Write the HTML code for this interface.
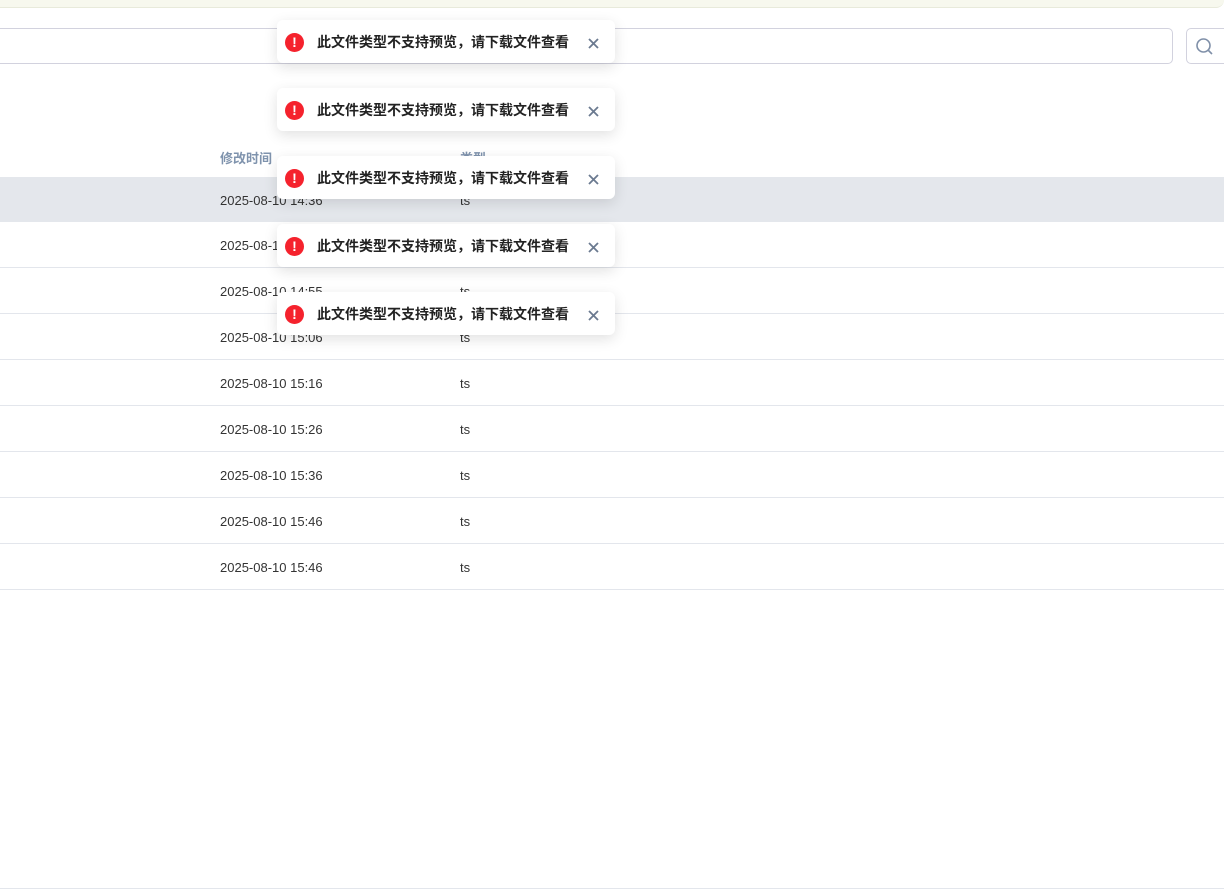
<!DOCTYPE html>
<html><head><meta charset="utf-8"><style>
*{box-sizing:border-box;margin:0;padding:0}
body{width:1224px;height:891px;overflow:hidden;background:#fff;font-family:"Liberation Sans","Noto Sans CJK SC",sans-serif;position:relative;color:#333}
.top{position:absolute;left:0;top:0;width:1224px;height:8px;background:#f7f8ee;border-bottom:1px solid #e8eadb;border-bottom-right-radius:8px}
.inp{position:absolute;left:-10px;top:28px;width:1183px;height:36px;border:1px solid #d2d2de;border-radius:5px}
.sb{position:absolute;left:1186px;top:28px;width:60px;height:36px;border:1px solid #d2d2de;border-radius:5px}
.hd{position:absolute;top:148px;font-size:13px;color:#7f93ad;font-weight:bold}
.row{position:absolute;left:0;width:1224px;height:46px;border-bottom:1px solid #e3e6ec;font-size:13px;color:#333}
.row span{position:absolute;top:16px}
.t{position:absolute;left:277px;width:338px;height:43px;background:#fff;border-radius:6px;box-shadow:0 4px 14px rgba(0,0,0,.12);font-size:14px;font-weight:bold;color:#222}
.t .ic{position:absolute;left:8px;top:13px;width:19px;height:19px;border-radius:50%;background:#f5222d;color:#fff;font-size:14px;line-height:19px;text-align:center;font-weight:bold}
.t .tx{position:absolute;left:40px;top:12px}
.t svg{position:absolute;left:311px;top:18px}
.bot{position:absolute;left:0;top:888px;width:1224px;height:1px;background:#e3e6ec}
</style></head><body>
<div class="top"></div>
<div class="inp"></div>
<div class="sb"><svg width="20" height="20" style="position:absolute;left:8px;top:8px" viewBox="0 0 20 20"><circle cx="8.5" cy="8.5" r="6.5" fill="none" stroke="#7f8fa8" stroke-width="1.6"/><path d="M13.5 13.5L17 17" stroke="#7f8fa8" stroke-width="1.6"/></svg></div>
<div class="hd" style="left:220px">修改时间</div>
<div class="hd" style="left:460px">类型</div>
<div class="row" style="top:177px;background:#e4e7ec;height:45px;border:none"><span style="left:220px">2025-08-10 14:36</span><span style="left:460px">ts</span></div>
<div class="row" style="top:222px"><span style="left:220px">2025-08-10 14:46</span><span style="left:460px">ts</span></div>
<div class="row" style="top:268px"><span style="left:220px">2025-08-10 14:55</span><span style="left:460px">ts</span></div>
<div class="row" style="top:314px"><span style="left:220px">2025-08-10 15:06</span><span style="left:460px">ts</span></div>
<div class="row" style="top:360px"><span style="left:220px">2025-08-10 15:16</span><span style="left:460px">ts</span></div>
<div class="row" style="top:406px"><span style="left:220px">2025-08-10 15:26</span><span style="left:460px">ts</span></div>
<div class="row" style="top:452px"><span style="left:220px">2025-08-10 15:36</span><span style="left:460px">ts</span></div>
<div class="row" style="top:498px"><span style="left:220px">2025-08-10 15:46</span><span style="left:460px">ts</span></div>
<div class="row" style="top:544px"><span style="left:220px">2025-08-10 15:46</span><span style="left:460px">ts</span></div>
<div class="bot"></div>
<div class="t" style="top:20px"><div class="ic">!</div><div class="tx">此文件类型不支持预览，请下载文件查看</div><svg width="11" height="11" viewBox="0 0 11 11"><path d="M1 1L10 10M10 1L1 10" stroke="#6b7a90" stroke-width="1.8"/></svg></div>
<div class="t" style="top:88px"><div class="ic">!</div><div class="tx">此文件类型不支持预览，请下载文件查看</div><svg width="11" height="11" viewBox="0 0 11 11"><path d="M1 1L10 10M10 1L1 10" stroke="#6b7a90" stroke-width="1.8"/></svg></div>
<div class="t" style="top:156px"><div class="ic">!</div><div class="tx">此文件类型不支持预览，请下载文件查看</div><svg width="11" height="11" viewBox="0 0 11 11"><path d="M1 1L10 10M10 1L1 10" stroke="#6b7a90" stroke-width="1.8"/></svg></div>
<div class="t" style="top:224px"><div class="ic">!</div><div class="tx">此文件类型不支持预览，请下载文件查看</div><svg width="11" height="11" viewBox="0 0 11 11"><path d="M1 1L10 10M10 1L1 10" stroke="#6b7a90" stroke-width="1.8"/></svg></div>
<div class="t" style="top:292px"><div class="ic">!</div><div class="tx">此文件类型不支持预览，请下载文件查看</div><svg width="11" height="11" viewBox="0 0 11 11"><path d="M1 1L10 10M10 1L1 10" stroke="#6b7a90" stroke-width="1.8"/></svg></div>
</body></html>
